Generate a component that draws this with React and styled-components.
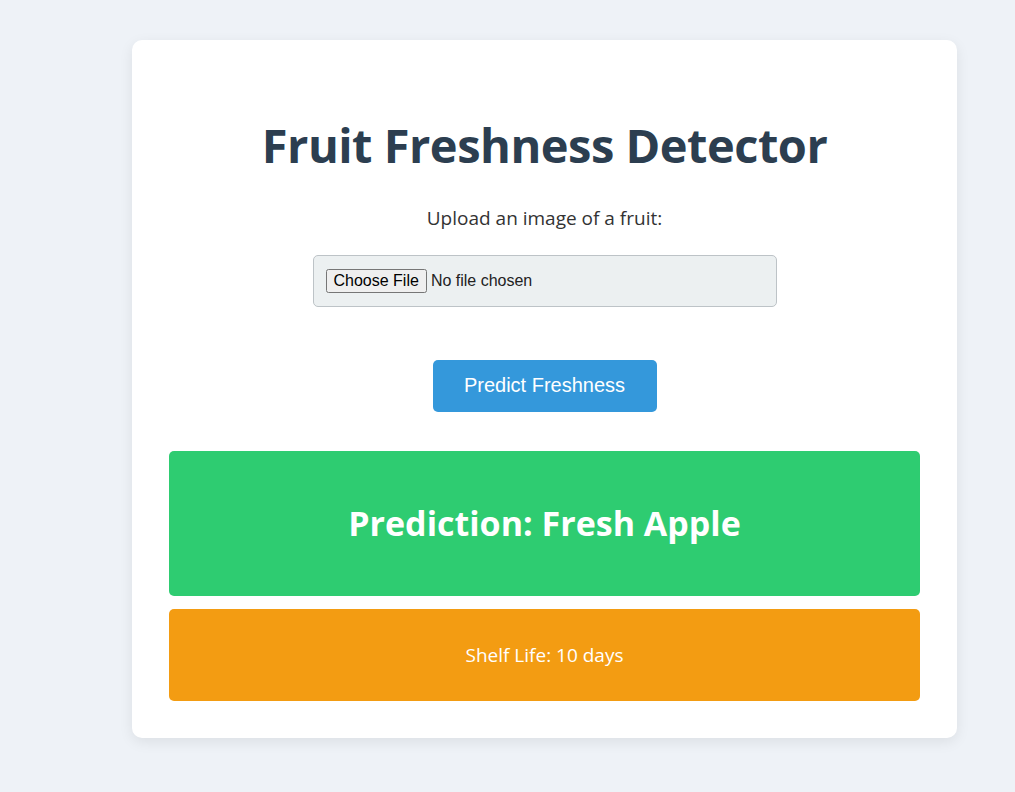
import React from 'react';
import styled, { createGlobalStyle } from 'styled-components';

const GlobalStyle = createGlobalStyle`
  body {
    margin: 0;
    background: #eef2f7;
    font-family: "Open Sans", "Noto Sans", sans-serif;
  }
`;

const Page = styled.div`
  padding: 40px 0 54px 132px;
`;

const Card = styled.div`
  width: 825px;
  box-sizing: border-box;
  background: #ffffff;
  border-radius: 10px;
  box-shadow: 0 4px 14px rgba(0, 0, 0, 0.08);
  padding: 73px 37px 37px;
  display: flex;
  flex-direction: column;
  align-items: center;
`;

const Title = styled.h1`
  margin: 0;
  font-size: 47px;
  font-weight: 700;
  color: #2c3e50;
  letter-spacing: -0.5px;
  line-height: 1.4;
`;

const Label = styled.p`
  margin: 26px 0 0;
  font-size: 19px;
  color: #333;
`;

const FileBox = styled.div`
  margin-top: 24px;
  width: 464px;
  height: 52px;
  box-sizing: border-box;
  background: #ecf0f1;
  border: 1px solid #bdc3c7;
  border-radius: 5px;
  display: flex;
  align-items: center;
  padding: 0 12px;

  input {
    font-family: "Liberation Sans", Arial, sans-serif;
    font-size: 16px;
    color: #222;
  }
`;

const PredictButton = styled.button`
  margin-top: 53px;
  width: 224px;
  height: 52px;
  border: none;
  border-radius: 5px;
  background: #3498db;
  color: #fff;
  font-family: "Liberation Sans", Arial, sans-serif;
  font-size: 20px;
  cursor: pointer;
`;

const ResultBox = styled.div`
  align-self: stretch;
  border-radius: 5px;
  background: ${p => p.$bg};
  color: #fff;
  display: flex;
  align-items: center;
  justify-content: center;
  height: ${p => p.$h}px;
  margin-top: ${p => p.$mt}px;
  font-size: ${p => p.$size}px;
  font-weight: ${p => p.$weight};
`;

export default function App() {
  return (
    <>
      <GlobalStyle />
      <Page>
        <Card>
          <Title>Fruit Freshness Detector</Title>
          <Label>Upload an image of a fruit:</Label>
          <FileBox>
            <input type="file" />
          </FileBox>
          <PredictButton>Predict Freshness</PredictButton>
          <ResultBox $bg="#2ecc71" $h={145} $mt={39} $size={34} $weight={700}>
            Prediction: Fresh Apple
          </ResultBox>
          <ResultBox $bg="#f39c12" $h={92} $mt={13} $size={19} $weight={400}>
            Shelf Life: 10 days
          </ResultBox>
        </Card>
      </Page>
    </>
  );
}
